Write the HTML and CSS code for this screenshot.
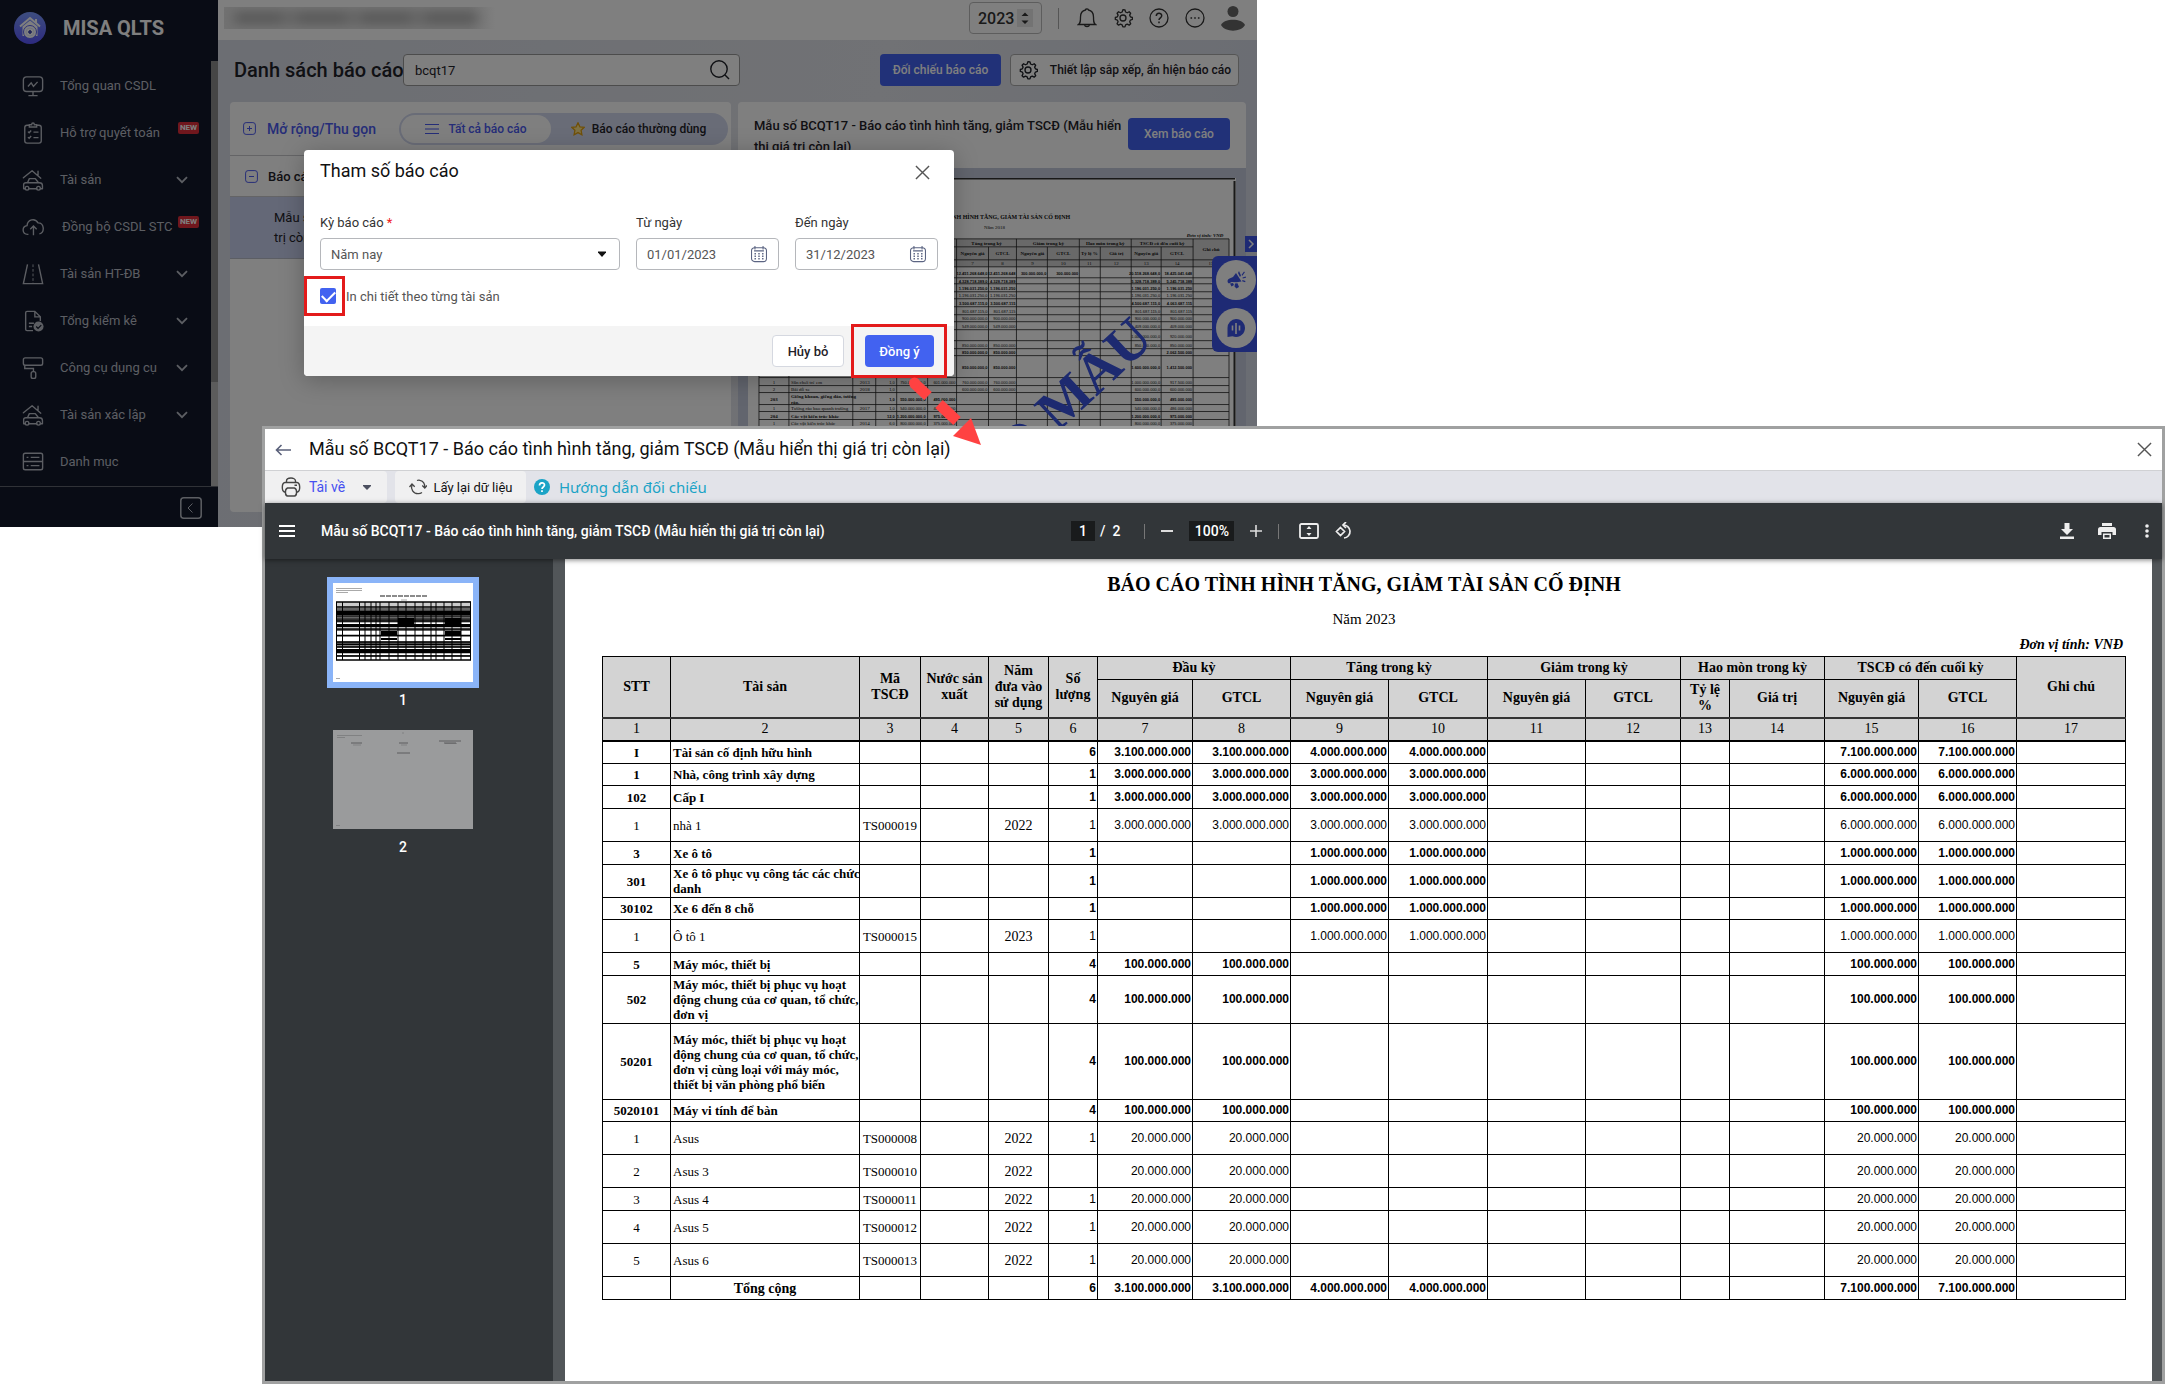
FILE: index.html
```html
<!DOCTYPE html>
<html lang="vi">
<head>
<meta charset="utf-8">
<title>MISA QLTS - Danh sách báo cáo</title>
<link rel="stylesheet" href="styles.css">
</head>
<body>
<svg class="defs" aria-hidden="true">
  <symbol id="chev" viewBox="0 0 12 8"><path d="M1 1.2l5 5 5-5" fill="none" stroke="currentColor" stroke-width="1.8"/></symbol>
  <symbol id="gear" viewBox="0 0 24 24"><g fill="none" stroke="currentColor" stroke-width="1.6" stroke-linejoin="round"><path d="M12 2l2.400.400.7 2.400 2 .9 2.300-1.200 1.800 1.700-1.200 2.400.9 2 2.400.8v2.300l-2.400.8-.9 2 1.200 2.300-1.800 1.800-2.300-1.200-2 .9-.7 2.300h-2.600l-.8-2.300-2-.9-2.300 1.200-1.800-1.800 1.200-2.300-.9-2-2.400-.8v-2.300l2.400-.8.9-2-1.200-2.400 1.800-1.700 2.300 1.200 2-.9.800-2.400z"/><circle cx="12" cy="12" r="3.600"/></g></symbol>
  <symbol id="house-car" viewBox="0 0 24 24"><g fill="none" stroke="currentColor" stroke-width="1.500" stroke-linejoin="round" stroke-linecap="round"><path d="M1.500 9.500L11 2l9.500 8M17.500 6.500V2.500"/><path d="M6 15l2-4.500h6.500L18 15M3.500 21.500H1.800V17c0-1.500 1-2 2.500-2h14.500c2.200 0 3.500 1 3.500 3v3.500h-2M7.500 21.500h8.500"/><circle cx="5.500" cy="21" r="2"/><circle cx="18" cy="21" r="2"/></g></symbol>
  <symbol id="calendar" viewBox="0 0 20 20"><rect x="1.700" y="3" width="16.600" height="15.500" rx="3.500" fill="none" stroke="currentColor" stroke-width="1.200"/><path d="M5.500 1v4M14.500 1v4M4.500 6.500h11" stroke="currentColor" stroke-width="1.200"/><path d="M5 9.700h1.600M9.200 9.700h1.600M13.400 9.700H15M5 12.500h1.600M9.200 12.500h1.600M13.400 12.500H15M5 15.300h1.600M9.200 15.300h1.600M13.400 15.300H15" stroke="currentColor" stroke-width="1.500"/></symbol>
  <symbol id="close" viewBox="0 0 16 16"><path d="M1 1l14 14M15 1L1 15" stroke="currentColor" stroke-width="1.500"/></symbol>
</svg>

<div class="app">
  <aside class="side">
    <div class="brand">
      <svg width="32" height="32" viewBox="0 0 32 32"><defs><linearGradient id="lg" x2="0" y2="1"><stop stop-color="#7c9cff"/><stop offset="1" stop-color="#5a55ff"/></linearGradient></defs><circle cx="16" cy="16" r="16" fill="url(#lg)"/><path d="M6 14.500L16 6l10 8.500M22 7v4" fill="none" stroke="#fff" stroke-width="2"/><path d="M8.500 14.500L16 8.500l7.500 6V24h-15z" fill="#fff"/><circle cx="16" cy="20" r="6.500" fill="#fff" stroke="#5a62f0"/><circle cx="16" cy="20" r="4" fill="none" stroke="#dfe3ff"/><path d="M16 18v4M14 20h4" stroke="#3a44b0" stroke-width="1.600"/></svg>
      <span>MISA QLTS</span>
    </div>
    <div class="side-scroll">
      <nav class="menu">
        <a href="#"><svg viewBox="0 0 24 24"><g fill="none" stroke="currentColor" stroke-width="1.500"><rect x="1.500" y="2" width="21" height="16" rx="3.500"/><path d="M12 18v4M7 22.500h10M6.500 12.500l3.500-4 2.500 4L17 7.500"/></g></svg><span>Tổng quan CSDL</span></a>
        <a href="#"><svg viewBox="0 0 24 24"><g fill="none" stroke="currentColor" stroke-width="1.500"><rect x="3" y="3.500" width="18" height="19.500" rx="2.500"/><path d="M8 5.500V3h2.500c0-2.500 3-2.500 3 0H16v2.500z" fill="#12182a"/><path d="M6.500 10.500l1.300 1.300 2.200-2.500M6.500 16.500l1.300 1.300 2.200-2.500M12.500 11H18M12.500 17H18"/></g></svg><span>Hỗ trợ quyết toán</span><b class="new">NEW</b></a>
        <a href="#"><svg viewBox="0 0 24 24"><use href="#house-car"/></svg><span>Tài sản</span><svg class="chev"><use href="#chev"/></svg></a>
        <a href="#" class="tight"><svg viewBox="0 0 24 24"><path d="M7 20H6c-6 0-6.500-8.500-.5-9.500C6 4 14 1.500 17.500 7.500c7 0 7.500 10.500 1.500 12M12.500 21v-9.500M9 14.500l3.500-3.500 3.500 3.500" fill="none" stroke="currentColor" stroke-width="1.500"/></svg><span>Đồng bộ CSDL STC</span><b class="new">NEW</b></a>
        <a href="#"><svg viewBox="0 0 24 24"><path d="M6 1.500L1.500 22.500h21L18 1.500" fill="none" stroke="currentColor" stroke-width="1.500"/><path d="M12 1.500v21" stroke="currentColor" stroke-dasharray="3 2"/></svg><span>Tài sản HT-ĐB</span><svg class="chev"><use href="#chev"/></svg></a>
        <a href="#"><svg viewBox="0 0 24 24"><path d="M12 22.500H5.500c-1 0-1.500-.5-1.500-1.500V3c0-1 .5-1.500 1.500-1.500H14l6 6V12M14 1.500v6h6M7.500 14.500H13M7.500 18H11" fill="none" stroke="currentColor" stroke-width="1.500"/><circle cx="18" cy="18" r="5.500" fill="currentColor"/><path d="M15.500 18l2 2 3.500-3.500" fill="none" stroke="#12182a" stroke-width="1.400"/></svg><span>Tổng kiểm kê</span><svg class="chev"><use href="#chev"/></svg></a>
        <a href="#"><svg viewBox="0 0 24 24"><g fill="none" stroke="currentColor" stroke-width="1.500"><rect x="1.500" y="1" width="21" height="8" rx="2"/><path d="M3 9v3.500h9.500V16"/><rect x="10" y="16" width="5" height="7.500" rx="2"/></g></svg><span>Công cụ dụng cụ</span><svg class="chev"><use href="#chev"/></svg></a>
        <a href="#"><svg viewBox="0 0 24 24"><use href="#house-car"/></svg><span>Tài sản xác lập</span><svg class="chev"><use href="#chev"/></svg></a>
        <a href="#"><svg viewBox="0 0 24 24"><g fill="none" stroke="currentColor" stroke-width="1.500"><rect x="1.500" y="2.500" width="21" height="18" rx="2"/><path d="M1.500 11.500h21M5 7h2M9.500 7H19M5 16h2M9.500 16H19"/></g></svg><span>Danh mục</span></a>
      </nav>
      <div class="track"><div class="track-thumb"></div></div>
    </div>
    <div class="side-foot"><button type="button" aria-label="Thu gọn"><svg width="22" height="22" viewBox="0 0 22 22"><rect x=".8" y=".8" width="20.400" height="20.400" rx="3" fill="none" stroke="currentColor" stroke-width="1.500"/><path d="M12.500 6.500L8 11l4.500 4.500" fill="none" stroke="currentColor"/></svg></button></div>
  </aside>

  <div class="work">
    <header class="topbar">
      <div class="org" aria-hidden="true"><i></i></div>
      <label class="year"><select aria-label="Năm"><option>2023</option></select><svg width="16" height="18" viewBox="0 0 16 18"><rect width="16" height="18" fill="#e6e6e6"/><path d="M4.500 7L8 3.500 11.500 7zM4.500 11.500L8 15l3.500-3.500z" fill="#333"/></svg></label>
      <i class="vline"></i>
      <div class="tools">
        <button type="button" aria-label="Thông báo"><svg viewBox="0 0 20 20"><path d="M1.500 16.500c2-1.500 2-3 2-7.500 0-4.500 2.500-6.500 5-7 0-1.500 3-1.500 3 0 2.500.5 5 2.500 5 7 0 4.500 0 6 2 7.500zM7.500 16.800c.5 2.300 4.500 2.300 5 0" fill="none" stroke="currentColor" stroke-width="1.300"/></svg></button>
        <button type="button" aria-label="Cài đặt"><svg viewBox="0 0 24 24"><use href="#gear"/></svg></button>
        <button type="button" aria-label="Trợ giúp"><svg viewBox="0 0 20 20"><circle cx="10" cy="10" r="9" fill="none" stroke="currentColor" stroke-width="1.300"/><path d="M7.300 8c0-3.500 5.400-3.500 5.400-.2 0 2-2.700 2-2.700 4.200M10 13.500v1.700" fill="none" stroke="currentColor" stroke-width="1.500"/></svg></button>
        <button type="button" aria-label="Thêm"><svg viewBox="0 0 20 20"><circle cx="10" cy="10" r="9" fill="none" stroke="currentColor" stroke-width="1.300"/><path d="M5.500 10h1.600M9.200 10h1.600M12.900 10h1.600" stroke="currentColor" stroke-width="1.500"/></svg></button>
        <button type="button" class="avatar" aria-label="Tài khoản"><svg viewBox="0 0 24 26"><circle cx="12" cy="6.500" r="5.500"/><path d="M0 20c3-7 21-7 24 0-4 7.500-20 7.500-24 0z"/></svg></button>
      </div>
    </header>

    <main class="main">
      <div class="head">
        <h1>Danh sách báo cáo</h1>
        <label class="search"><input type="text" value="bcqt17" aria-label="Tìm báo cáo"><svg width="20" height="20" viewBox="0 0 20 20"><circle cx="9" cy="9" r="8.200" fill="none" stroke="currentColor" stroke-width="1.400"/><path d="M15 15l4 4" stroke="currentColor" stroke-width="1.400"/></svg></label>
        <button type="button" class="btn blue push">Đối chiếu báo cáo</button>
        <button type="button" class="btn setup"><svg width="20" height="20" viewBox="0 0 24 24"><use href="#gear"/></svg>Thiết lập sắp xếp, ẩn hiện báo cáo</button>
      </div>
      <div class="cols">
        <section class="list">
          <div class="list-head">
            <svg width="13" height="13" viewBox="0 0 13 13"><rect x=".6" y=".6" width="11.800" height="11.800" rx="2.500" fill="none" stroke="#4b5af0"/><path d="M4 6.500h5M6.500 4v5" stroke="#4b5af0"/></svg>
            <a href="#">Mở rộng/Thu gọn</a>
            <div class="pill">
              <button type="button" class="on"><svg width="14" height="12" viewBox="0 0 14 12"><path d="M0 1.500h14M0 6h14M0 10.500h14" stroke="#4b5af0"/></svg>Tất cả báo cáo</button>
              <button type="button"><svg width="14" height="14" viewBox="0 0 14 14"><path d="M7 .8l1.900 4 4.400.5-3.200 3 .8 4.400L7 10.600l-3.900 2.100.8-4.400-3.200-3 4.400-.5z" fill="#ffe58a" stroke="#e0a010" stroke-width="1.300"/></svg>Báo cáo thường dùng</button>
            </div>
          </div>
          <div class="list-group"><svg width="13" height="13" viewBox="0 0 13 13"><rect x=".6" y=".6" width="11.800" height="11.800" rx="2.500" fill="none" stroke="#4b5af0"/><path d="M4 6.500h5" stroke="#4b5af0"/></svg><b>Báo cáo</b></div>
          <div class="list-item">Mẫu số<br>trị còn</div>
        </section>
        <section class="preview">
          <div class="preview-head">
            <h2>Mẫu số BCQT17 - Báo cáo tình hình tăng, giảm TSCĐ (Mẫu hiển<br>thị giá trị còn lại)</h2>
            <button type="button" class="btn blue">Xem báo cáo</button>
          </div>
          <div class="preview-body">
            <svg class="sample" viewBox="0 0 489 300" preserveAspectRatio="xMinYMin slice">
              <rect width="489" height="300" fill="#fff"/>
              <path d="M0 .5h488M487.500 3v297" stroke="#333" stroke-width="2"/>
              <rect x="11" y="61" width="471" height="28" fill="#d3d3d3"/>
              <path d="M11 61H482M128 69H446M11 82H482M11 89H482M11 100H482M11 106H482M11 114H482M11 121H482M11 129H482M11 137H482M11 144H482M11 152H482M11 163H482M11 171H482M11 178H482M11 200H482M11 208H482M11 215H482M11 227H482M11 234H482M11 242H482M11 61V300M41 61V300M105 61V300M128 61V300M149 61V300M180 61V300M209 61V300M241 69V300M269 61V300M300 69V300M332 61V300M353 69V300M384 61V300M414 69V300M446 61V300M482 61V300" fill="none" stroke="#222" stroke-width=".8"/>
              <g class="s-bold" text-anchor="middle">
                <text class="s-title" x="246" y="41">BÁO CÁO TÌNH HÌNH TĂNG, GIẢM TÀI SẢN CỐ ĐỊNH</text>
                <text class="s-reg" x="247" y="51">Năm 2018</text>
                <text class="s-it" x="458" y="59.500">Đơn vị tính: VNĐ</text>
                <text x="239" y="67">Tăng trong kỳ</text><text x="301" y="67">Giảm trong kỳ</text><text x="358" y="67">Hao mòn trong kỳ</text><text x="415" y="67">TSCĐ có đến cuối kỳ</text><text x="464" y="73">Ghi chú</text>
                <text x="225" y="77">Nguyên giá</text><text x="255" y="77">GTCL</text><text x="285" y="77">Nguyên giá</text><text x="316" y="77">GTCL</text><text x="342" y="77">Tỷ lệ %</text><text x="369" y="77">Giá trị</text><text x="399" y="77">Nguyên giá</text><text x="430" y="77">GTCL</text>
              </g>
              <g class="s-reg" text-anchor="middle">
                <text y="87"><tspan x="225">7</tspan><tspan x="255">8</tspan><tspan x="285">9</tspan><tspan x="316">10</tspan><tspan x="342">11</tspan><tspan x="369">12</tspan><tspan x="399">13</tspan><tspan x="430">14</tspan><tspan x="464">15</tspan></text>
                <text x="26" y="206">1</text><text x="26" y="213">2</text><text class="s-bold" x="26" y="223">203</text><text x="26" y="232">1</text><text class="s-bold" x="26" y="240">204</text><text x="26" y="248">1</text>
                <text x="117" y="206">2013</text><text x="117" y="213">2018</text><text x="117" y="232">2017</text><text x="117" y="248">2014</text>
              </g>
              <g class="s-reg"><text x="43" y="206">Sân chơi trẻ em</text><text x="43" y="213">Bãi đỗ xe</text><text x="43" y="232">Tường rào bao quanh trường</text><text x="43" y="248">Các vật kiến trúc khác</text></g>
              <g class="s-bold"><text x="43" y="220">Giếng khoan, giếng đào, tường</text><text x="43" y="226">rào.</text><text x="43" y="240">Các vật kiến trúc khác</text></g>
              <g class="s-num" text-anchor="end">
                <text><tspan x="240" y="97">12.451.268.648,0</tspan><tspan x="268" y="97">12.451.268.648</tspan><tspan x="299" y="97">300.000.000,0</tspan><tspan x="331" y="97">300.000.000</tspan><tspan x="413" y="97">20.518.268.648,0</tspan><tspan x="445" y="97">18.425.041.648</tspan></text>
                <text><tspan x="240" y="105">4.328.718.389,0</tspan><tspan x="268" y="105">4.328.718.389</tspan><tspan x="413" y="105">5.328.718.389,0</tspan><tspan x="445" y="105">5.245.718.389</tspan></text>
                <text><tspan x="240" y="112">1.196.031.250,0</tspan><tspan x="268" y="112">1.196.031.250</tspan><tspan x="413" y="112">1.196.031.250,0</tspan><tspan x="445" y="112">1.196.031.250</tspan></text>
                <text><tspan x="240" y="127">3.500.687.115,0</tspan><tspan x="268" y="127">3.500.687.115</tspan><tspan x="413" y="127">4.500.687.115,0</tspan><tspan x="445" y="127">4.063.687.115</tspan></text>
                <text><tspan x="240" y="176">850.000.000,0</tspan><tspan x="268" y="176">850.000.000</tspan><tspan x="445" y="176">2.062.500.000</tspan></text>
                <text><tspan x="240" y="191">850.000.000,0</tspan><tspan x="268" y="191">850.000.000</tspan><tspan x="413" y="191">1.600.000.000,0</tspan><tspan x="445" y="191">1.412.500.000</tspan></text>
                <text><tspan x="147" y="223">1,0</tspan><tspan x="178" y="223">550.000.000,0</tspan><tspan x="208" y="223">495.000.000</tspan><tspan x="413" y="223">550.000.000,0</tspan><tspan x="445" y="223">495.000.000</tspan></text>
                <text><tspan x="147" y="240">12,0</tspan><tspan x="178" y="240">1.200.000.000,0</tspan><tspan x="208" y="240">975.000.000</tspan><tspan x="413" y="240">1.200.000.000,0</tspan><tspan x="445" y="240">975.000.000</tspan></text>
              </g>
              <g class="s-num light" text-anchor="end">
                <text><tspan x="240" y="119">1.196.031.250,0</tspan><tspan x="268" y="119">1.196.031.250</tspan><tspan x="413" y="119">1.196.031.250,0</tspan><tspan x="445" y="119">1.196.031.250</tspan></text>
                <text><tspan x="240" y="135">801.687.115,0</tspan><tspan x="268" y="135">801.687.115</tspan><tspan x="413" y="135">801.687.115,0</tspan><tspan x="445" y="135">801.687.115</tspan></text>
                <text><tspan x="240" y="142">900.000.000,0</tspan><tspan x="268" y="142">900.000.000</tspan><tspan x="413" y="142">900.000.000,0</tspan><tspan x="445" y="142">900.000.000</tspan></text>
                <text><tspan x="240" y="150">549.000.000,0</tspan><tspan x="268" y="150">549.000.000</tspan><tspan x="413" y="150">409.000.000,0</tspan><tspan x="445" y="150">409.000.000</tspan></text>
                <text><tspan x="413" y="160">1.000.000.000,0</tspan><tspan x="445" y="160">920.000.000</tspan></text>
                <text><tspan x="240" y="169">850.000.000,0</tspan><tspan x="268" y="169">850.000.000</tspan><tspan x="413" y="169">850.000.000,0</tspan><tspan x="445" y="169">850.000.000</tspan></text>
                <text><tspan x="147" y="206">1,0</tspan><tspan x="178" y="206">750.000.000,0</tspan><tspan x="208" y="206">601.000.000</tspan><tspan x="240" y="206">760.000.000,0</tspan><tspan x="268" y="206">760.000.000</tspan><tspan x="413" y="206">1.000.000.000,0</tspan><tspan x="445" y="206">917.500.000</tspan></text>
                <text><tspan x="147" y="213">1,0</tspan><tspan x="240" y="213">600.000.000,0</tspan><tspan x="268" y="213">600.000.000</tspan><tspan x="413" y="213">600.000.000,0</tspan><tspan x="445" y="213">600.000.000</tspan></text>
                <text><tspan x="147" y="232">1,0</tspan><tspan x="178" y="232">540.000.000,0</tspan><tspan x="208" y="232">486.000.000</tspan><tspan x="413" y="232">540.000.000,0</tspan><tspan x="445" y="232">486.000.000</tspan></text>
                <text><tspan x="147" y="248">6,0</tspan><tspan x="178" y="248">800.000.000,0</tspan><tspan x="208" y="248">375.000.000</tspan><tspan x="413" y="248">800.000.000,0</tspan><tspan x="445" y="248">375.000.000</tspan></text>
              </g>
              <text class="s-mark" text-anchor="end" transform="translate(408 164) rotate(-43)">BÁO CÁO MẪU</text>
            </svg>
          </div>
        </section>
      </div>
    </main>
    <div class="dock">
      <button type="button" class="dock-tab" aria-label="Mở"><svg width="8" height="10" viewBox="0 0 8 10"><path d="M2 1l4 4-4 4" fill="none" stroke="#fff" stroke-width="1.500"/></svg></button>
      <div class="dock-box">
        <button type="button" aria-label="Tin tức"><svg width="20" height="20" viewBox="0 0 20 20" fill="#3d55e8"><path d="M10 3l5.500 8.500-5 .8-5-.3-2.500 1.500C1 12.500 1 9.500 3.500 8.500L7 7zM4 13.500l3-.5 1 2-2.500 1.500zM9 13.500l2.500-.3 1.500 3.800-2.500 1.500-2-2zM12 3l1-2 2 4.500-1 1.500zM15.500 5l2.500-3.500.9.700-2.500 3.500zM16.500 7.500l3.200-1 .3 1.200-3.200.9zM16.500 10l3 1-.4 1.200-3-1z"/></svg></button>
        <button type="button" aria-label="Trợ lý"><svg width="20" height="20" viewBox="0 0 20 20"><path d="M10 1a9 9 0 1 1-3.500 17.300L1.500 19V10A9 9 0 0 1 10 1z" fill="#3d55e8"/><path d="M6.500 7.500v5M10 5v11M13.500 7.500v5" stroke="#fff" stroke-width="1.600"/></svg></button>
      </div>
    </div>
  </div>
  <div class="scrim"></div>

  <form class="dialog" role="dialog" aria-labelledby="dlg">
    <div class="dialog-head"><h2 id="dlg">Tham số báo cáo</h2><button type="button" aria-label="Đóng"><svg width="15" height="15"><use href="#close"/></svg></button></div>
    <div class="dialog-body">
      <div class="fields">
        <div class="field wide"><label for="ky">Kỳ báo cáo <em>*</em></label><div class="box"><select id="ky"><option>Năm nay</option></select><svg width="8" height="6" viewBox="0 0 8 6"><path d="M0 .5h8v1L4 6 0 1.500z" fill="#111"/></svg></div></div>
        <div class="field"><label for="tu">Từ ngày</label><div class="box"><input id="tu" type="text" value="01/01/2023"><svg width="18" height="18"><use href="#calendar"/></svg></div></div>
        <div class="field"><label for="den">Đến ngày</label><div class="box"><input id="den" type="text" value="31/12/2023"><svg width="18" height="18"><use href="#calendar"/></svg></div></div>
      </div>
      <label class="check"><input type="checkbox" checked>In chi tiết theo từng tài sản</label>
    </div>
    <div class="dialog-foot"><button type="button" class="btn cancel">Hủy bỏ</button><button type="submit" class="btn blue ok">Đồng ý</button></div>
    <i class="mark mark-check"></i><i class="mark mark-ok"></i>
  </form>
</div>

<section class="report">
  <header class="report-title">
    <button type="button" aria-label="Quay lại"><svg width="16" height="12" viewBox="0 0 16 12"><path d="M16 6H1.500M6.500 1l-5 5 5 5" fill="none" stroke="#59607a" stroke-width="1.600"/></svg></button>
    <h2>Mẫu số BCQT17 - Báo cáo tình hình tăng, giảm TSCĐ (Mẫu hiển thị giá trị còn lại)</h2>
    <button type="button" class="shut" aria-label="Đóng"><svg width="15" height="15"><use href="#close"/></svg></button>
  </header>
  <div class="report-tools">
    <button type="button" class="rt down"><svg width="20" height="20" viewBox="0 0 20 20"><g fill="none" stroke="#444" stroke-width="1.400"><path d="M5.500 5V4c0-4 9-4 9 0v1M5 15H3.500C.5 14 .5 6 4 5.500h12C19.500 6 19.500 14 16.500 15H15"/><path d="M6.500 11h7c3 1 2.500 8 0 8h-7c-2.500 0-3-7 0-8zM13.500 8.300H16"/></g></svg><span>Tải về</span><svg width="8" height="5" viewBox="0 0 8 5"><path d="M0 0h8v1L4 5 0 1z" fill="#4c5060"/></svg></button>
    <button type="button" class="rt reload"><svg width="18" height="16" viewBox="0 0 18 16"><g fill="none" stroke="#444" stroke-width="1.300"><path d="M11 1.300c3 .7 5 3.500 4.800 7.500M3 5.500C1.500 10 4 15 9.500 14.700c1.500 0 2.500-.5 3.500-1.200M8 1.500C9 1 10 1 11 1.300"/><path d="M.5 8L3 5l2.700 2.700M13.300 6.500L15.800 9 18 6.500"/></g></svg>Lấy lại dữ liệu</button>
    <a href="#" class="guide"><svg width="16" height="16" viewBox="0 0 16 16"><circle cx="8" cy="8" r="8" fill="#1ba3c6"/><path d="M5.500 6.500c0-3.500 5-3.300 5-.4C10.500 8 8 8 8 10M8 11.300v1.800" fill="none" stroke="#fff" stroke-width="1.700"/></svg>Hướng dẫn đối chiếu</a>
  </div>
  <div class="pdfbar">
    <div class="pdf-left"><button type="button" aria-label="Trình đơn"><svg width="16" height="12" viewBox="0 0 16 12"><path d="M0 1h16M0 6h16M0 11h16" stroke="#fff" stroke-width="2"/></svg></button><span>Mẫu số BCQT17 - Báo cáo tình hình tăng, giảm TSCĐ (Mẫu hiển thị giá trị còn lại)</span></div>
    <div class="pdf-mid">
      <input type="text" value="1" class="pg" aria-label="Trang"><span class="of">/&nbsp; 2</span><i></i>
      <button type="button" aria-label="Thu nhỏ"><svg width="12" height="12"><path d="M0 6h12" stroke="#ddd" stroke-width="2"/></svg></button>
      <input type="text" value="100%" class="zoom" aria-label="Thu phóng">
      <button type="button" aria-label="Phóng to"><svg width="12" height="12"><path d="M0 6h12M6 0v12" stroke="#ddd" stroke-width="1.600"/></svg></button><i class="last"></i>
      <button type="button" class="fit" aria-label="Vừa trang"><svg width="20" height="16" viewBox="0 0 20 16"><rect x="1" y="1" width="18" height="14" rx="1.500" fill="none" stroke="#eee" stroke-width="1.800"/><path d="M10 3l2.500 3h-5zM10 13l2.500-3h-5z" fill="#eee"/></svg></button>
      <button type="button" aria-label="Xoay"><svg width="18" height="18" viewBox="0 0 18 18"><g fill="none" stroke="#eee" stroke-width="1.700"><path d="M5.500 5.500L9.500 9.500l-4 4-4-4zM8 3a6.500 6.500 0 1 1 1 13"/><path d="M11 0L8 3l3 3"/></g></svg></button>
    </div>
    <div class="pdf-right">
      <button type="button" aria-label="Tải xuống"><svg width="14" height="16" viewBox="0 0 14 16"><path d="M4.500 0h5v6H13L7 12 1 6h3.500zM0 13.500h14V16H0z" fill="#eee"/></svg></button>
      <button type="button" aria-label="In"><svg width="18" height="16" viewBox="0 0 18 16"><path d="M4 0h10v3H4zM2.500 4h13A2.500 2.500 0 0 1 18 6.500V12h-3.500V9h-11v3H0V6.500A2.500 2.500 0 0 1 2.500 4zM5 10.500h8V16H5z" fill="#eee"/><path d="M6.500 12h5v2.500h-5z" fill="#323639"/></svg></button>
      <button type="button" aria-label="Khác"><svg width="4" height="14" viewBox="0 0 4 14"><circle cx="2" cy="2" r="1.800" fill="#eee"/><circle cx="2" cy="7" r="1.800" fill="#eee"/><circle cx="2" cy="12" r="1.800" fill="#eee"/></svg></button>
    </div>
  </div>
  <div class="viewer">
    <aside class="thumbs">
      <a href="#" class="thumb current"><svg width="140" height="99" viewBox="0 0 140 99"><path fill="#fff" d="M0 0h140v99H0z"/><path d="M3 5.500h26M3 7.500h26M3 9.500h12M68 17h6M128 18.500h10M3 95.500h4" stroke="#aaa"/><path d="M47 13h47" stroke="#666" stroke-width="1.500" stroke-dasharray="5 1"/><path d="M3 19h135v6H3z" fill="#ccc"/><path d="M3 25h135v7H3zM3 33.500h135v1.500H3zM3 36.500h135v3H3zM3 46h135v2H3zM3 52h135v1.500H3zM3 58.500h135v4H3zM3 63h135v1.500H3zM3 72h135v1.500H3z" fill="#666"/><path d="M3 19h135M3 24h135M3 28.500h135M3 30.500h135M3 33h135M3 36h135M3 38h135M3 42h135M3 43.500h135M3 46h135M3 52.500h135M3 59h135M3 61.500h135M3 64h135M3 67.500h135M3 69.500h135M3 73h135M3 77h135" stroke="#000" stroke-width="1.400"/><path d="M3 29h135v3H3zM3 41h135v3H3zM3 66h135v3H3zM65 35h16v8H65zM112 35h16v8H112zM48 48h16v4H48zM112 48h16v4H112zM48 55h16v2H48zM112 55h16v2H112z"/><path d="M3.500 19v58M9.500 19v58M26.500 19v58M32 19v58M38 19v58M43 19v58M47 19v58M56 19v58M65 19v58M73 19v58M82 19v58M90 19v58M98 19v58M103 19v58M111 19v58M119 19v58M128 19v58M137.500 19v58" stroke="#000"/></svg></a>
      <span>1</span>
      <a href="#" class="thumb"><svg width="140" height="99" viewBox="0 0 140 99"><path fill="#9a9b9c" d="M0 0h140v99H0z"/><path d="M4 5.500h25M4 7.500h8M69 3h2M3 95.500h4M20 15h8M68 15h6M112 13.500h12" stroke="#808182"/><path d="M18 13h11M66 13h9M106 11h22M111 13h12M64 23h13" stroke="#5c5d5e"/></svg></a>
      <span>2</span>
    </aside>
    <article class="page">
      <h3>BÁO CÁO TÌNH HÌNH TĂNG, GIẢM TÀI SẢN CỐ ĐỊNH</h3>
      <p class="sub">Năm 2023</p>
      <p class="unit">Đơn vị tính: VNĐ</p>
      <table class="grid">
        <colgroup><col style="width:68px"><col style="width:189px"><col style="width:61px"><col style="width:68px"><col style="width:60px"><col style="width:49px"><col style="width:95px"><col style="width:98px"><col style="width:98px"><col style="width:99px"><col style="width:98px"><col style="width:95px"><col style="width:49px"><col style="width:95px"><col style="width:94px"><col style="width:98px"><col style="width:109px"></colgroup>
        <thead>
          <tr class="h23"><th rowspan="2">STT</th><th rowspan="2">Tài sản</th><th rowspan="2">Mã<br>TSCĐ</th><th rowspan="2">Nước sản<br>xuất</th><th rowspan="2">Năm<br>đưa vào<br>sử dụng</th><th rowspan="2">Số<br>lượng</th><th colspan="2">Đầu kỳ</th><th colspan="2">Tăng trong kỳ</th><th colspan="2">Giảm trong kỳ</th><th colspan="2">Hao mòn trong kỳ</th><th colspan="2">TSCĐ có đến cuối kỳ</th><th rowspan="2">Ghi chú</th></tr>
          <tr class="h38"><th>Nguyên giá</th><th>GTCL</th><th>Nguyên giá</th><th>GTCL</th><th>Nguyên giá</th><th>GTCL</th><th>Tỷ lệ<br>%</th><th>Giá trị</th><th>Nguyên giá</th><th>GTCL</th></tr>
          <tr class="h23 nums"><td>1</td><td>2</td><td>3</td><td>4</td><td>5</td><td>6</td><td>7</td><td>8</td><td>9</td><td>10</td><td>11</td><td>12</td><td>13</td><td>14</td><td>15</td><td>16</td><td>17</td></tr>
        </thead>
        <tbody>
          <tr class="h23 b"><td>I</td><td>Tài sản cố định hữu hình</td><td></td><td></td><td></td><td>6</td><td>3.100.000.000</td><td>3.100.000.000</td><td>4.000.000.000</td><td>4.000.000.000</td><td></td><td></td><td></td><td></td><td>7.100.000.000</td><td>7.100.000.000</td><td></td></tr>
          <tr class="h22 b"><td>1</td><td>Nhà, công trình xây dựng</td><td></td><td></td><td></td><td>1</td><td>3.000.000.000</td><td>3.000.000.000</td><td>3.000.000.000</td><td>3.000.000.000</td><td></td><td></td><td></td><td></td><td>6.000.000.000</td><td>6.000.000.000</td><td></td></tr>
          <tr class="h23 b"><td>102</td><td>Cấp I</td><td></td><td></td><td></td><td>1</td><td>3.000.000.000</td><td>3.000.000.000</td><td>3.000.000.000</td><td>3.000.000.000</td><td></td><td></td><td></td><td></td><td>6.000.000.000</td><td>6.000.000.000</td><td></td></tr>
          <tr class="h33"><td>1</td><td>nhà 1</td><td>TS000019</td><td></td><td>2022</td><td>1</td><td>3.000.000.000</td><td>3.000.000.000</td><td>3.000.000.000</td><td>3.000.000.000</td><td></td><td></td><td></td><td></td><td>6.000.000.000</td><td>6.000.000.000</td><td></td></tr>
          <tr class="h23 b"><td>3</td><td>Xe ô tô</td><td></td><td></td><td></td><td>1</td><td></td><td></td><td>1.000.000.000</td><td>1.000.000.000</td><td></td><td></td><td></td><td></td><td>1.000.000.000</td><td>1.000.000.000</td><td></td></tr>
          <tr class="h33 b"><td>301</td><td>Xe ô tô phục vụ công tác các chức<br>danh</td><td></td><td></td><td></td><td>1</td><td></td><td></td><td>1.000.000.000</td><td>1.000.000.000</td><td></td><td></td><td></td><td></td><td>1.000.000.000</td><td>1.000.000.000</td><td></td></tr>
          <tr class="h22 b"><td>30102</td><td>Xe 6 đến 8 chỗ</td><td></td><td></td><td></td><td>1</td><td></td><td></td><td>1.000.000.000</td><td>1.000.000.000</td><td></td><td></td><td></td><td></td><td>1.000.000.000</td><td>1.000.000.000</td><td></td></tr>
          <tr class="h33"><td>1</td><td>Ô tô 1</td><td>TS000015</td><td></td><td>2023</td><td>1</td><td></td><td></td><td>1.000.000.000</td><td>1.000.000.000</td><td></td><td></td><td></td><td></td><td>1.000.000.000</td><td>1.000.000.000</td><td></td></tr>
          <tr class="h23 b"><td>5</td><td>Máy móc, thiết bị</td><td></td><td></td><td></td><td>4</td><td>100.000.000</td><td>100.000.000</td><td></td><td></td><td></td><td></td><td></td><td></td><td>100.000.000</td><td>100.000.000</td><td></td></tr>
          <tr class="h48 b"><td>502</td><td>Máy móc, thiết bị phục vụ hoạt<br>động chung của cơ quan, tổ chức,<br>đơn vị</td><td></td><td></td><td></td><td>4</td><td>100.000.000</td><td>100.000.000</td><td></td><td></td><td></td><td></td><td></td><td></td><td>100.000.000</td><td>100.000.000</td><td></td></tr>
          <tr class="h76 b"><td>50201</td><td>Máy móc, thiết bị phục vụ hoạt<br>động chung của cơ quan, tổ chức,<br>đơn vị cùng loại với máy móc,<br>thiết bị văn phòng phổ biến</td><td></td><td></td><td></td><td>4</td><td>100.000.000</td><td>100.000.000</td><td></td><td></td><td></td><td></td><td></td><td></td><td>100.000.000</td><td>100.000.000</td><td></td></tr>
          <tr class="h22 b"><td>5020101</td><td>Máy vi tính để bàn</td><td></td><td></td><td></td><td>4</td><td>100.000.000</td><td>100.000.000</td><td></td><td></td><td></td><td></td><td></td><td></td><td>100.000.000</td><td>100.000.000</td><td></td></tr>
          <tr class="h33"><td>1</td><td>Asus</td><td>TS000008</td><td></td><td>2022</td><td>1</td><td>20.000.000</td><td>20.000.000</td><td></td><td></td><td></td><td></td><td></td><td></td><td>20.000.000</td><td>20.000.000</td><td></td></tr>
          <tr class="h33"><td>2</td><td>Asus 3</td><td>TS000010</td><td></td><td>2022</td><td></td><td>20.000.000</td><td>20.000.000</td><td></td><td></td><td></td><td></td><td></td><td></td><td>20.000.000</td><td>20.000.000</td><td></td></tr>
          <tr class="h23"><td>3</td><td>Asus 4</td><td>TS000011</td><td></td><td>2022</td><td>1</td><td>20.000.000</td><td>20.000.000</td><td></td><td></td><td></td><td></td><td></td><td></td><td>20.000.000</td><td>20.000.000</td><td></td></tr>
          <tr class="h33"><td>4</td><td>Asus 5</td><td>TS000012</td><td></td><td>2022</td><td>1</td><td>20.000.000</td><td>20.000.000</td><td></td><td></td><td></td><td></td><td></td><td></td><td>20.000.000</td><td>20.000.000</td><td></td></tr>
          <tr class="h33"><td>5</td><td>Asus 6</td><td>TS000013</td><td></td><td>2022</td><td>1</td><td>20.000.000</td><td>20.000.000</td><td></td><td></td><td></td><td></td><td></td><td></td><td>20.000.000</td><td>20.000.000</td><td></td></tr>
          <tr class="h23 b total"><td></td><td>Tổng cộng</td><td></td><td></td><td></td><td>6</td><td>3.100.000.000</td><td>3.100.000.000</td><td>4.000.000.000</td><td>4.000.000.000</td><td></td><td></td><td></td><td></td><td>7.100.000.000</td><td>7.100.000.000</td><td></td></tr>
        </tbody>
      </table>
    </article>
  </div>
</section>

<svg class="arrow" width="80" height="74" viewBox="0 0 80 74" aria-hidden="true"><g fill="#ff4242"><path d="M20 24L6 11" stroke="#ff4242" stroke-width="11" stroke-linecap="butt"/><circle cx="6.500" cy="11" r="5.500"/><path d="M49 49L31 32" stroke="#ff4242" stroke-width="11"/><path d="M63 46L45 64l28 9z"/></g></svg>
</body>
</html>
```
FILE: styles.css
```css
* { box-sizing: border-box; }
body { margin: 0; position: relative; min-height: 100vh; background: #fff; font-family: Roboto, "Noto Sans", sans-serif; font-size: 13px; color: #1f2229; overflow: hidden; }
h1, h2, h3, p { margin: 0; font-weight: 400; }
button, input, select { font: inherit; color: inherit; padding: 0; margin: 0; border: 0; background: none; border-radius: 0; outline: 0; }
button { display: inline-flex; align-items: center; justify-content: center; white-space: nowrap; }
select { appearance: none; }
a { color: inherit; text-decoration: none; }
svg { display: block; flex: none; }
.defs { position: absolute; width: 0; height: 0; }

/* application window */
.app { position: absolute; left: 0; top: 0; right: 908px; height: 527px; display: flex; overflow: hidden; }
.scrim { position: absolute; inset: 0; background: rgba(0, 0, 0, .5); }

.side { width: 218px; flex: none; display: flex; flex-direction: column; background: #12182a; color: #b9bdc6; }
.brand { height: 61px; padding: 12px 14px 17px; display: flex; align-items: center; gap: 17px; font-size: 20px; font-weight: 700; color: #fff; }
.side-scroll { flex: 1; display: flex; min-height: 0; }
.menu { flex: 1; display: flex; flex-direction: column; padding: 1px 19px 0 22px; font-size: 13px; }
.menu a { height: 47px; display: flex; align-items: center; gap: 16px; white-space: nowrap; position: relative; }
.menu a > svg:first-child { width: 22px; height: 22px; }
.menu .chev { width: 12px; height: 8px; margin-left: auto; margin-right: 4px; }
.menu .tight { gap: 18px; }
.new { position: absolute; right: -7px; top: 13px; width: 21px; line-height: 12px; background: #e02f3a; border-radius: 2px; color: #fff; font-size: 8px; text-align: center; }
.track { width: 7px; background: #b8b8b8; }
.track-thumb { height: 321px; background: #8c8c8c; }
.side-foot { height: 41px; border-top: 1px solid #60646e; display: flex; justify-content: flex-end; align-items: center; padding: 2px 16px 0; }

.work { flex: 1; min-width: 0; display: flex; flex-direction: column; position: relative; background: linear-gradient(100deg, #d8dce6, #e2e4ea 60%, #d4d9e6); }
.topbar { height: 40px; flex: none; background: #fff; display: flex; align-items: center; padding: 0 12px 4px 6px; color: #333; }
.org { width: 272px; height: 22px; margin-right: auto; overflow: hidden; background: linear-gradient(90deg, #e4e4e4 90%, #fff); display: flex; align-items: center; padding: 0 10px; }
.org i { flex: 1; height: 8px; margin-right: 6px; border-radius: 4px; background: repeating-linear-gradient(90deg, #999 0 44px, #bbb 52px 64px); filter: blur(6px); }
.year { width: 73px; height: 32px; border: 1px solid #bbb; border-radius: 4px; display: flex; align-items: center; justify-content: space-between; padding: 0 8px; font-size: 16px; font-weight: 500; }
.year select { width: 40px; }
.vline { width: 1px; height: 21px; background: #aaa; margin: 0 18px 0 16px; }
.tools { display: flex; align-items: center; gap: 16px; }
.tools svg { width: 20px; height: 20px; }
.tools .avatar svg { width: 24px; height: 26px; fill: #666; }

.main { flex: 1; display: flex; flex-direction: column; padding: 14px 11px 15px 12px; min-height: 0; }
.head { display: flex; align-items: center; height: 32px; margin-bottom: 16px; padding: 0 7px 0 4px; }
.head h1 { font-size: 20px; font-weight: 500; white-space: nowrap; width: 169px; }
.search { width: 337px; height: 32px; display: flex; align-items: center; background: #fff; border: 1px solid #999; border-radius: 4px; padding: 0 9px 0 11px; }
.search input { flex: 1; min-width: 0; }
.btn { height: 32px; border-radius: 4px; font-weight: 500; }
.blue { background: #4262f0; color: #fff; }
.main .btn { font-size: 12px; }
.push { margin-left: auto; width: 121px; }
.setup { width: 229px; margin-left: 9px; border: 1px solid #aaa; background: #fff; gap: 12px; }
.cols { flex: 1; display: grid; grid-template-columns: 501fr 508fr; gap: 7px; min-height: 0; }
.list { background: #fff; border-radius: 4px; overflow: hidden; }
.list-head { height: 54px; display: flex; align-items: center; padding: 0 3px 0 13px; border-bottom: 1px solid #c8c8cc; color: #4b5af0; font-size: 14px; font-weight: 500; }
.list-head > a { margin-left: 11px; white-space: nowrap; }
.pill { width: 329px; height: 32px; margin-left: auto; border-radius: 16px; background: #d3d9ef; display: flex; padding: 2px; font-size: 12px; }
.pill button { flex: 1; gap: 7px; color: #1f2229; border-radius: 14px; font-weight: 500; }
.pill .on { flex: none; width: 150px; background: #fff; color: #4b5af0; gap: 9px; }
.list-group { height: 41px; border-bottom: 1px solid #c8c8cc; display: flex; align-items: center; gap: 10px; padding: 0 15px; }
.list-group b { font-weight: 500; }
.list-item { height: 62px; padding: 11px 44px; line-height: 20px; white-space: nowrap; background: #c8d0ee; border-bottom: 1px solid #b8bcc8; }
.preview { display: flex; flex-direction: column; min-width: 0; min-height: 0; }
.preview-head { height: 66px; flex: none; background: #fff; border-radius: 4px 4px 0 0; padding: 16px 16px 0; display: flex; justify-content: space-between; }
.preview-head h2 { font-size: 13px; font-weight: 500; line-height: 21px; margin-top: -3px; white-space: nowrap; }
.preview-head .btn { width: 102px; flex: none; }
.preview-body { flex: 1; min-height: 0; background: #c4cbdd; padding: 10px 10px 0; overflow: hidden; }
.sample { width: 100%; height: auto; }
.sample text { font-family: "Liberation Serif", serif; font-size: 5px; fill: #111; }
.sample .s-bold text, .sample text.s-bold { font-weight: 700; }
.sample text.s-reg { font-weight: 400; }
.sample text.s-title { font-size: 6px; }
.sample text.s-it { font-style: italic; }
.sample .s-num text { font-family: "Liberation Sans", sans-serif; font-size: 4px; font-weight: 700; }
.sample .light text { font-weight: 400; }
.sample text.s-mark { font-size: 56px; font-weight: 700; fill: #3a55e0; }

.dock { position: absolute; right: 0; top: 236px; display: flex; flex-direction: column; align-items: flex-end; gap: 4px; }
.dock-tab { width: 12px; height: 16px; background: #3d55e8; }
.dock-box { width: 45px; height: 96px; background: #3d55e8; border-radius: 6px 0 0 6px; display: flex; flex-direction: column; align-items: center; justify-content: space-around; padding: 0 0 0 2px; }
.dock-box button { width: 40px; height: 40px; border-radius: 50%; background: #fff; }

/* parameters dialog */
.dialog { position: absolute; left: 304px; top: 150px; width: 650px; background: #fff; border-radius: 4px; box-shadow: 0 4px 24px rgba(0, 0, 0, .25); }
.dialog-head { height: 44px; display: flex; align-items: center; justify-content: space-between; padding: 0 24px 0 16px; color: #555; }
.dialog-head h2 { font-size: 18px; color: #111; padding-bottom: 3px; }
.dialog-body { padding: 21px 16px 22px; }
.fields { display: flex; gap: 16px; }
.field { width: 143px; }
.field.wide { flex: 1; }
.field label { display: block; line-height: 16px; margin-bottom: 7px; color: #333; }
.field em { color: #f02020; font-style: normal; }
.box { height: 32px; border: 1px solid #b5b7bb; border-radius: 4px; display: flex; align-items: center; padding: 0 10px; color: #5b6482; }
.box input, .box select { flex: 1; min-width: 0; color: #555; }
.wide .box { padding-right: 13px; }
.check { display: flex; align-items: center; gap: 10px; height: 16px; margin-top: 18px; color: #555; }
.check input { appearance: none; width: 16px; height: 16px; border-radius: 2px; background: #4262f0; display: grid; place-items: center; }
.check input::after { content: ""; width: 11px; height: 6px; border: solid #fff; border-width: 0 0 2px 2px; transform: translateY(-1px) rotate(-45deg); }
.dialog-foot { height: 50px; background: #f4f4f4; border-radius: 0 0 4px 4px; display: flex; justify-content: flex-end; align-items: center; gap: 21px; padding: 0 20px; }
.cancel { width: 72px; background: #fff; border: 1px solid #d5d8e0; }
.ok { width: 69px; }
.mark { position: absolute; border: 3px solid #e31b1b; }
.mark-check { left: 0; top: 126px; width: 41px; height: 40px; }
.mark-ok { right: 7px; top: 174px; width: 96px; height: 54px; }

/* report window */
.report { position: absolute; left: 262px; top: 426px; right: 0; bottom: 0; border: 3px solid #a0a1a1; background: #fff; display: flex; flex-direction: column; }
.report-title { height: 42px; flex: none; display: flex; align-items: center; padding: 0 10px; border-bottom: 1px solid #d0d1d4; gap: 18px; color: #555; }
.report-title h2 { font-size: 18px; color: #111; flex: 1; white-space: nowrap; padding-bottom: 3px; }
.report-tools { height: 32px; flex: none; background: #e2e3e9; display: flex; gap: 8px; }
.rt { background: #f0f0f1; border-radius: 0 4px 4px 0; color: #111; }
.down { width: 122px; gap: 18px; font-size: 14px; color: #4650f0; }
.down svg:first-child { margin-right: -10px; }
.reload { width: 131px; gap: 7px; border-radius: 4px; }
.guide { display: flex; align-items: center; gap: 9px; font-family: "Noto Sans", sans-serif; font-size: 15px; color: #1ba3c6; white-space: nowrap; }
.pdfbar { height: 56px; flex: none; display: grid; grid-template-columns: 806px 1fr auto; align-items: center; background: #323639; color: #fff; font-size: 14px; font-weight: 500; position: relative; box-shadow: 0 1px 5px rgba(0, 0, 0, .5); }
.pdf-left { display: flex; align-items: center; gap: 26px; padding-left: 14px; white-space: nowrap; }
.pdf-mid { display: flex; align-items: center; gap: 16px; }
.pdf-mid i { width: 1px; height: 15px; background: #777; margin-left: 6px; }
.pdf-mid .last { margin-left: 0; }
.pdf-mid input { height: 20px; background: #191b1c; text-align: center; }
.pg { width: 24px; }
.zoom { width: 45px; }
.of { margin: 0 2px 0 -11px; }
.fit { margin-left: 4px; }
.pdf-right { display: flex; align-items: center; gap: 24px; padding-right: 13px; }
.pdf-right button:last-child { margin-left: 5px; }
.viewer { flex: 1; display: grid; grid-template-columns: 288px 1fr; background: #525659; min-height: 0; }
.thumbs { background: #323639; display: flex; flex-direction: column; align-items: center; padding: 18px 12px 0 0; color: #fff; font-size: 14px; font-weight: 500; line-height: 16px; }
.thumb.current { border: 6px solid #8ab4f8; }
.thumbs span { margin: 10px 0 0; }
.thumbs .current + span { margin: 4px 0 22px; }
.page { margin: 0 10px 0 12px; background: #fff; padding: 13px 26px 0 37px; color: #000; font-family: "Liberation Serif", serif; overflow: hidden; }
.page h3 { font-size: 20px; line-height: 24px; font-weight: 700; text-align: center; }
.sub { font-size: 15px; line-height: 18px; margin-top: 14px; text-align: center; }
.unit { font-size: 14px; line-height: 18px; margin: 8px 3px 2px; text-align: right; font-weight: 700; font-style: italic; }
.grid { width: 100%; table-layout: fixed; border-collapse: collapse; font-size: 13px; line-height: 15px; }
.grid th, .grid td { border: 1px solid #000; padding: 0 2px; text-align: center; white-space: nowrap; }
.grid thead { font-size: 14px; line-height: 16px; background: #d3d3d3; }
.grid thead th, .grid thead td { padding: 0; }
.nums td { border-top: 2px solid #333; border-bottom: 2px solid #000; }
.grid tbody td:nth-child(2) { text-align: left; }
.grid tbody td:nth-child(5) { font-size: 14px; }
.grid tbody td:nth-child(n+6) { text-align: right; font: 12px/15px "Liberation Sans", sans-serif; padding: 0 1px; }
.grid tbody .b td, .grid tbody .b td:nth-child(n+6) { font-weight: 700; }
.grid tbody .total td:nth-child(2) { text-align: center; font-size: 14px; }
.h22 { height: 22px; }
.h23 { height: 23px; }
.h33 { height: 33px; }
.h38 { height: 38px; }
.h48 { height: 48px; }
.h76 { height: 76px; }

.arrow { position: absolute; left: 908px; top: 372px; }
```
